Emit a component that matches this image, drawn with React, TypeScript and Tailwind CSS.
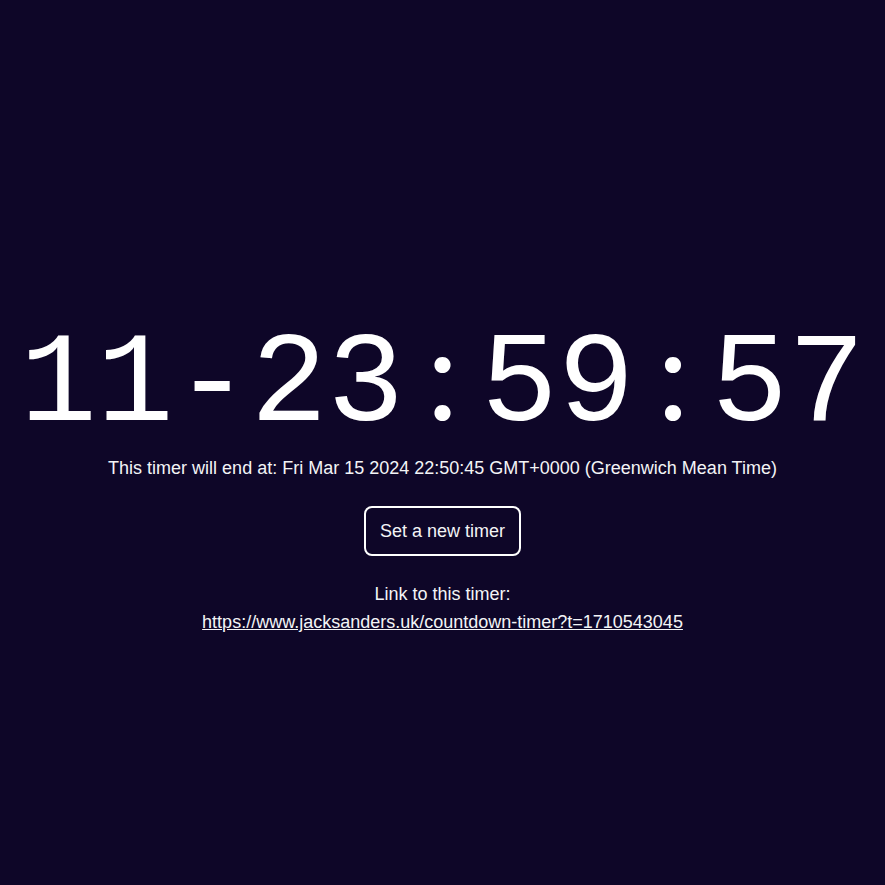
import React from 'react';

const Colon = () => (
    <span className="inline-block w-[76.8px] text-center font-['Lato',sans-serif]">:</span>
);

export default function App() {
    const url = "https://www.jacksanders.uk/countdown-timer?t=1710543045";

    return (
        <div className="min-h-screen bg-[#0e0628] text-white flex flex-col items-center justify-center font-['Liberation_Sans',sans-serif] text-lg pt-[58px]">
            <div className="mb-1 text-[128px] leading-none font-['Liberation_Mono',monospace] whitespace-nowrap">
                11-23<Colon />59<Colon />57
            </div>
            <p className="text-gray-100">
                This timer will end at: Fri Mar 15 2024 22:50:45 GMT+0000 (Greenwich Mean Time)
            </p>
            <button className="mt-6 px-[14px] py-[9px] border-2 border-white rounded-lg text-gray-100">
                Set a new timer
            </button>
            <div className="mt-6 flex flex-col items-center text-gray-100">
                <span>Link to this timer:</span>
                <a href={url} className="underline">{url}</a>
            </div>
        </div>
    );
};
